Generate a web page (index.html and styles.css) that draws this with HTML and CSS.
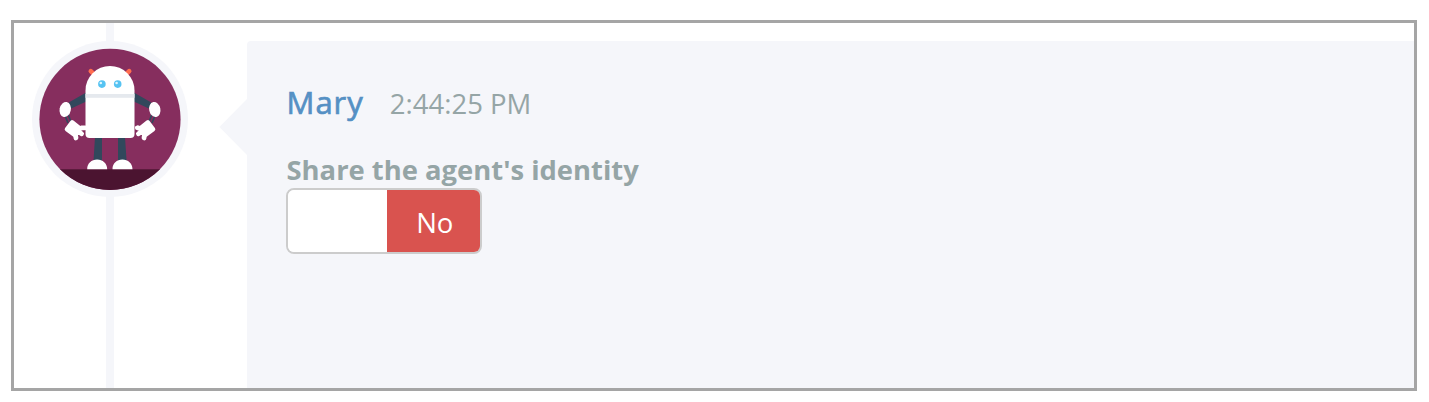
FILE: index.html
```html
<!DOCTYPE html>
<html lang="en">
<head>
<meta charset="utf-8">
<title>Timeline</title>
<link rel="stylesheet" href="styles.css">
</head>
<body>
<main class="frame">
  <div class="rail">
    <svg class="avatar" viewBox="31.8 41 156 156" role="img" aria-label="Robot avatar">
      <defs><clipPath id="disc"><circle cx="109.8" cy="119.3" r="70.6"/></clipPath></defs>
      <circle cx="109.8" cy="119" r="78" fill="#f5f6fa"/>
      <g clip-path="url(#disc)">
        <rect x="38" y="48" width="144" height="143" fill="#862e5e"/>
        <rect x="38" y="169.3" width="144" height="22" fill="#4b1430"/>
        <!-- antennae -->
        <path d="M90.600 71.200l4 4M129 71.200l-4 4" stroke="#ff6d50" stroke-width="4.600" stroke-linecap="round"/>
        <!-- arms and legs -->
        <path d="M86 92.500v9L71 108.500l-2.500-6zM133.600 92.500v9l15 7 2.500-6z" fill="#31485c"/>
        <path d="M64.600 115l3.200 8M67.700 114l3.200 8M155 115l-3.200 8M151.900 114l-3.200 8" stroke="#31485c" stroke-width="1.700"/>
        <path d="M94.800 137h7v24h-8.500zM117.800 137h7l1.600 24h-8.600z" fill="#31485c"/>
        <!-- hands -->
        <g fill="#fff" stroke="#fff" stroke-linejoin="round" stroke-linecap="round">
          <path d="M72 122L79.500 128 74 134.800 66.500 129.300z" stroke-width="4"/>
          <path d="M78 129.500l4-1.700h3M77 131l4.400 2.800M75 133l.8 5" stroke-width="4.800"/>
        </g>
        <g fill="#fff" stroke="#fff" stroke-linejoin="round" stroke-linecap="round">
          <path d="M147.600 122L140.100 128 145.600 134.800 153.100 129.300z" stroke-width="4"/>
          <path d="M141.600 129.500l-4-1.700M142.600 131l-4.400 2.800M144.600 133l-.8 5M137.600 127.800h-.5" stroke-width="4.800"/>
        </g>
        <ellipse cx="65" cy="109.500" rx="5.600" ry="7.600" transform="rotate(12 65 109.500)" fill="#fff"/>
        <ellipse cx="154.600" cy="109.500" rx="5.600" ry="7.600" transform="rotate(-12 154.600 109.500)" fill="#fff"/>
        <!-- feet -->
        <path d="M87 169.200c0-5.800 4.300-9.700 9.900-9.700s10.100 3.900 10.100 9.700zM112.300 169.200c0-5.800 4.300-9.700 9.900-9.700s10.100 3.900 10.100 9.700z" fill="#fff"/>
        <!-- head and body -->
        <path d="M85.300 90.500a24.500 24.500 0 0 1 49 0V134q0 4-4 4H89.300q-4 0-4-4z" fill="#fff"/>
        <rect x="85.300" y="94" width="49" height="3.800" fill="#e5e9ee"/>
        <circle cx="101.700" cy="84.100" r="3.800" fill="#56c3f2"/><circle cx="117.500" cy="84.100" r="3.800" fill="#56c3f2"/>
        <circle cx="100.600" cy="83" r="1.300" fill="#dff5ff"/><circle cx="116.400" cy="83" r="1.300" fill="#dff5ff"/>
      </g>
    </svg>
  </div>
  <section class="message">
    <svg class="pointer" viewBox="0 0 28 56"><path d="M28 0L.5 28 28 56z" fill="#f5f6fa"/></svg>
    <header class="heading"><a class="name">Mary</a><time class="time">2:44:25 PM</time></header>
    <div class="label">Share the agent's identity</div>
    <div class="switch"><span class="handle"></span><span class="off">No</span></div>
  </section>
</main>
</body>
</html>
```

FILE: styles.css
```css
* { box-sizing: border-box; }
body { margin: 0; padding: 20px 12px 11px 11px; background: #fff; font-family: "Open Sans", sans-serif; color: #95a5a6; }
.frame { display: flex; height: 371px; border: 3px solid #a5a5a5; }
.rail {
  flex: none; width: 233px; padding: 18px 0 0 18px;
  background: linear-gradient(#f5f6fa, #f5f6fa) 92px 0 / 8px 100% no-repeat;
}
.avatar { display: block; width: 156px; height: 156px; }
.message { position: relative; flex: 1; margin-top: 18px; padding: 40px 39px; background: #f5f6fa; border-top-left-radius: 4px; }
.pointer { position: absolute; left: -28px; top: 58px; width: 28px; height: 56px; }
.heading { display: flex; align-items: baseline; gap: 26px; height: 43px; line-height: 42px; padding-left: .5px; }
.name { font-size: 31px; letter-spacing: 1px; color: #5590c4; -webkit-text-stroke: .7px #5590c4; }
.time { font-size: 27.5px; }
.label { margin-top: 26px; height: 38px; line-height: 39px; padding-left: .5px; font-size: 27.4px; font-weight: 700; }
.switch { display: flex; width: 196px; height: 66px; border: 2px solid #ccc; border-radius: 8px; overflow: hidden; }
.handle { width: 98.5px; background: #fff; }
.off { flex: 1; padding-left: 3px; background: #d9534f; color: #fff; font-size: 27.5px; line-height: 65px; text-align: center; }
```
